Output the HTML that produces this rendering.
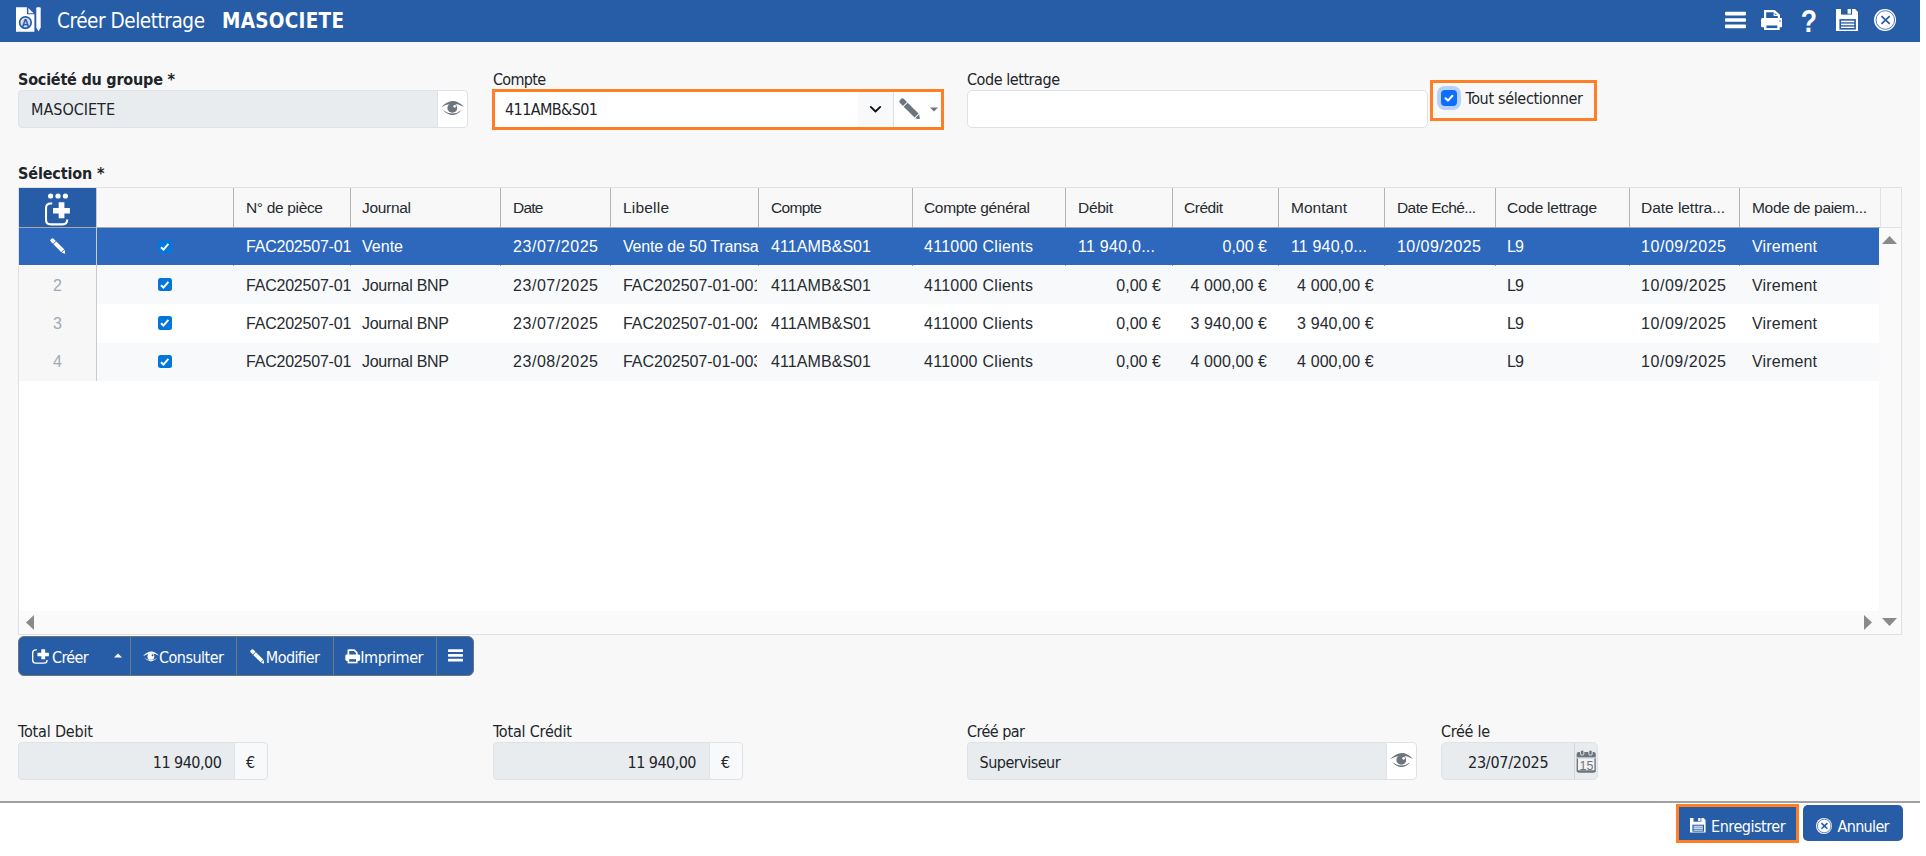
<!DOCTYPE html>
<html lang="fr"><head><meta charset="utf-8"><title>Créer Delettrage MASOCIETE</title>
<style>
html,body{margin:0;padding:0;background:#fff}
body{width:1926px;height:856px;position:relative;overflow:hidden;color:#212529}
#app{position:absolute;left:0;top:0;width:1920px;height:856px;overflow:hidden}
#app div,#app svg,#app span.t{position:absolute;box-sizing:border-box}
.t{white-space:pre;line-height:20px;height:20px}
.u{font-family:"DejaVu Sans Condensed","Liberation Sans",sans-serif}
.g{font-family:"Liberation Sans",sans-serif}
</style></head>
<body>
<div id="app">
<div class="hdr" style="left:0px;top:0px;width:1920px;height:42px;background:#275ca6"></div>
<svg style="left:16px;top:7px" width="25" height="25" viewBox="0 0 25 25" ><path d="M0,0.2H10.9V7.3H18.4V24.7H0Z" fill="#fff"/><path d="M12.3,1L17.7,6.2H12.3Z" fill="#fff"/>
<circle cx="9.4" cy="15.6" r="5.8" fill="#d3ddee" stroke="#275ca6" stroke-width="1.7"/>
<text x="9.4" y="19.6" font-family="Liberation Sans,sans-serif" font-weight="700" font-size="11" text-anchor="middle" fill="#275ca6">A</text>
<path d="M20.3,1.2Q20.3,0.2 21.3,0.2H23.7Q24.7,0.2 24.7,1.2V20.5L22.5,24.4L20.3,20.5Z" fill="#fff"/></svg>
<span class="t u" style="top:11.30px;font-size:20.5px;left:57px;color:#fff;letter-spacing:-0.439px;">Créer Delettrage</span>
<span class="t u" style="top:11.30px;font-size:20.5px;left:222px;font-weight:700;color:#fff;letter-spacing:0.277px;">MASOCIETE</span>
<svg style="left:1725px;top:11px" width="21" height="18" viewBox="0 0 21 18" ><rect x="0" y="0.8" width="21" height="3.6" rx="0.8" fill="#fff"/><rect x="0" y="7.2" width="21" height="3.6" rx="0.8" fill="#fff"/><rect x="0" y="13.6" width="21" height="3.6" rx="0.8" fill="#fff"/></svg>
<svg style="left:1760.75px;top:9.76px" width="21.5" height="20.7" viewBox="0 0 21.5 20.7" ><path d="M4.1,9.5V1.1H13.3L17.9,5.3V9.5" fill="#275ca6" stroke="#fff" stroke-width="2.2" stroke-linejoin="miter"/>
<path d="M13.2,1.1V5.4H17.9" fill="none" stroke="#fff" stroke-width="1.1"/>
<rect x="0" y="8" width="21.5" height="9.3" rx="1.6" fill="#fff"/>
<rect x="3" y="14" width="15.7" height="6.7" fill="#fff"/><rect x="5.4" y="15.5" width="10.9" height="2.6" fill="#275ca6"/>
<circle cx="19" cy="11.1" r="0.75" fill="#275ca6"/></svg>
<span class="t g" style="top:11.76px;font-size:31px;left:1659px;width:300px;text-align:center;font-weight:700;color:#fff;transform:scaleX(0.86);">?</span>
<svg style="left:1835.9px;top:9px" width="22.1" height="22" viewBox="0 0 22.1 22" preserveAspectRatio="none"><path d="M0,0H19.1L22.1,3.2V22H0Z" fill="#fff"/>
<rect x="5" y="0" width="11.1" height="5.6" fill="#275ca6"/><rect x="11.6" y="0" width="3.3" height="4.7" fill="#fff"/>
<rect x="3.4" y="10.1" width="16.5" height="10.5" fill="#275ca6"/>
<rect x="5" y="11.7" width="13.3" height="1.4" fill="#fff"/><rect x="5" y="13.6" width="13.3" height="1" fill="#9db4d8"/><rect x="5" y="14.9" width="13.3" height="1.3" fill="#fff"/><rect x="5" y="17.6" width="13.3" height="1.4" fill="#fff"/></svg>
<svg style="left:1874px;top:9px" width="22" height="22" viewBox="0 0 22 22" ><circle cx="11" cy="11" r="11" fill="#fff"/><circle cx="11.3" cy="11" r="9.3" fill="none" stroke="#275ca6" stroke-width="0.8"/>
<path d="M7.5,7.1L15.7,14.8M15.7,7.1L7.5,14.8" stroke="#275ca6" stroke-width="1.7" stroke-linecap="butt"/></svg>
<div class="main" style="left:0px;top:42px;width:1920px;height:759px;background:#f8f8f8"></div>
<span class="t u" style="top:69.66px;font-size:16px;left:18px;font-weight:700;letter-spacing:-0.214px;">Société du groupe *</span>
<div class="inp" style="left:18px;top:90px;width:420px;height:38px;background:#e9ecef;border:1px solid #dee2e6;border-radius:4px 0 0 4px"></div>
<div class="btn" style="left:437px;top:90px;width:31px;height:38px;background:#fff;border:1px solid #dee2e6;border-radius:0 4px 4px 0"></div>
<span class="t u" style="top:100.16px;font-size:16px;left:31px;letter-spacing:-0.002px;">MASOCIETE</span>
<svg style="left:441.2px;top:101px" width="23.3" height="14" viewBox="0 0 23.3 14" ><path d="M0,6.5Q11.6,-6.4 23.3,6.3Q11.6,-0.9 0,6.5Z" fill="#6c757d"/>
<path d="M1.8,8.9Q11.6,19.2 20.7,8.9Q11.6,16 1.8,8.9Z" fill="#6c757d"/>
<circle cx="11.3" cy="6.9" r="4.9" fill="#6c757d"/><circle cx="13.7" cy="5.3" r="1.35" fill="#fff"/></svg>
<span class="t u" style="top:69.66px;font-size:16px;left:493px;letter-spacing:-0.706px;">Compte</span>
<div class="inp" style="left:493px;top:90px;width:450px;height:38px;background:#fff;border:1px solid #dee2e6"></div>
<div style="left:858px;top:91px;width:35px;height:36px;background:#f8f9fa"></div>
<div style="left:893px;top:91px;width:1px;height:36px;background:#dee2e6"></div>
<span class="t u" style="top:100.16px;font-size:16px;left:505px;letter-spacing:-0.589px;">411AMB&amp;S01</span>
<svg style="left:868px;top:104px" width="15" height="10" viewBox="0 0 15 10" ><path d="M2.8,2.9L7.5,7.5L12.2,2.9" fill="none" stroke="#111" stroke-width="1.9" stroke-linecap="round" stroke-linejoin="round"/></svg>
<svg style="left:898.7px;top:97.8px" width="21.3" height="21.3" viewBox="-1.5 -1.5 21.3 21.3" ><g transform="rotate(45)" fill="#6c757d"><path d="M2.4,-2.8H6.4V2.8H2.4Q0,2.8 0,0.6V-0.6Q0,-2.8 2.4,-2.8Z"/>
<rect x="7.3" y="-2.8" width="15.4" height="5.6"/><path d="M23.6,-2.8L28,0.5L23.6,2.8Z"/></g></svg>
<svg style="left:930px;top:107px" width="8" height="5" viewBox="0 0 8 5" ><path d="M0,0.4H8L4,4.4Z" fill="#6c757d"/></svg>
<div class="hl" style="left:492px;top:89px;width:452px;height:41px;border:3px solid #ff7f27"></div>
<span class="t u" style="top:69.66px;font-size:16px;left:967px;letter-spacing:-0.443px;">Code lettrage</span>
<div class="inp" style="left:967px;top:90px;width:461px;height:38px;background:#fff;border:1px solid #dee2e6;border-radius:5px"></div>
<div class="hl" style="left:1430px;top:80px;width:167px;height:41px;border:3px solid #ff7f27"></div>
<div class="chk" style="left:1441px;top:89.6px;width:16px;height:16px;background:#0d6efd;border-radius:4px;box-shadow:0 0 0 4px rgba(13,110,253,.28)"></div>
<svg style="left:1441px;top:89.6px" width="16" height="16" viewBox="0 0 16 16" ><path d="M4.6,8.3L7,10.6L11.4,5.8" fill="none" stroke="#fff" stroke-width="2.1" stroke-linecap="round" stroke-linejoin="round"/></svg>
<span class="t u" style="top:88.96px;font-size:16px;left:1465.4px;letter-spacing:-0.326px;">Tout sélectionner</span>
<span class="t u" style="top:164.16px;font-size:16px;left:18px;font-weight:700;letter-spacing:-0.124px;">Sélection *</span>
<div class="grid" style="left:18px;top:187px;width:1884px;height:448px;background:#fff;border:1px solid #dee2e6"></div>
<div style="left:19px;top:188px;width:1861px;height:39px;background:#f8f8f8"></div>
<div style="left:1880px;top:188px;width:21px;height:40px;background:#f8f8f8;border-left:1px solid #dee2e6;border-bottom:1px solid #dee2e6"></div>
<div style="left:19px;top:188px;width:77px;height:39px;background:#275ca6"></div>
<div style="left:233px;top:188px;width:1px;height:39px;background:#b4b4b4"></div>
<div style="left:350px;top:188px;width:1px;height:39px;background:#b4b4b4"></div>
<div style="left:500px;top:188px;width:1px;height:39px;background:#b4b4b4"></div>
<div style="left:610px;top:188px;width:1px;height:39px;background:#b4b4b4"></div>
<div style="left:758px;top:188px;width:1px;height:39px;background:#b4b4b4"></div>
<div style="left:912px;top:188px;width:1px;height:39px;background:#b4b4b4"></div>
<div style="left:1065px;top:188px;width:1px;height:39px;background:#b4b4b4"></div>
<div style="left:1172px;top:188px;width:1px;height:39px;background:#b4b4b4"></div>
<div style="left:1278px;top:188px;width:1px;height:39px;background:#b4b4b4"></div>
<div style="left:1384px;top:188px;width:1px;height:39px;background:#b4b4b4"></div>
<div style="left:1495px;top:188px;width:1px;height:39px;background:#b4b4b4"></div>
<div style="left:1629px;top:188px;width:1px;height:39px;background:#b4b4b4"></div>
<div style="left:1739px;top:188px;width:1px;height:39px;background:#b4b4b4"></div>
<div style="left:19px;top:227px;width:1861px;height:1px;background:#a8a8a8"></div>
<div style="left:233px;top:265px;width:1px;height:1px;background:#7d9fd6"></div>
<div style="left:350px;top:265px;width:1px;height:1px;background:#7d9fd6"></div>
<div style="left:500px;top:265px;width:1px;height:1px;background:#7d9fd6"></div>
<div style="left:610px;top:265px;width:1px;height:1px;background:#7d9fd6"></div>
<div style="left:758px;top:265px;width:1px;height:1px;background:#7d9fd6"></div>
<div style="left:912px;top:265px;width:1px;height:1px;background:#7d9fd6"></div>
<div style="left:1065px;top:265px;width:1px;height:1px;background:#7d9fd6"></div>
<div style="left:1172px;top:265px;width:1px;height:1px;background:#7d9fd6"></div>
<div style="left:1278px;top:265px;width:1px;height:1px;background:#7d9fd6"></div>
<div style="left:1384px;top:265px;width:1px;height:1px;background:#7d9fd6"></div>
<div style="left:1495px;top:265px;width:1px;height:1px;background:#7d9fd6"></div>
<div style="left:1629px;top:265px;width:1px;height:1px;background:#7d9fd6"></div>
<div style="left:1739px;top:265px;width:1px;height:1px;background:#7d9fd6"></div>
<div style="left:19px;top:228px;width:1860px;height:37px;background:#2d68bd"></div>
<div style="left:19px;top:266px;width:1860px;height:38.39999999999998px;background:#f8f9fa"></div>
<div style="left:19px;top:304.4px;width:1860px;height:38.400000000000034px;background:#fff"></div>
<div style="left:19px;top:342.8px;width:1860px;height:38.39999999999998px;background:#f8f9fa"></div>
<div style="left:19px;top:228px;width:77px;height:37px;background:#2d68bd"></div>
<div style="left:19px;top:266px;width:77px;height:115.2px;background:#f7f7f7"></div>
<div style="left:96px;top:188px;width:1px;height:193.2px;background:#cbcbcb"></div>
<div style="left:1879px;top:228px;width:22px;height:383px;background:#fafafa"></div>
<div style="left:19px;top:611px;width:1882px;height:23px;background:#fafafa"></div>
<svg style="left:1882px;top:236px" width="15" height="8" viewBox="0 0 15 8" ><path d="M0,8L7.5,0L15,8Z" fill="#8a8a8a"/></svg>
<svg style="left:1882px;top:618px" width="15" height="8" viewBox="0 0 15 8" ><path d="M0,0H15L7.5,8Z" fill="#8a8a8a"/></svg>
<svg style="left:26px;top:615px" width="8" height="15" viewBox="0 0 8 15" ><path d="M8,0V15L0,7.5Z" fill="#8a8a8a"/></svg>
<svg style="left:1864px;top:615px" width="8" height="15" viewBox="0 0 8 15" ><path d="M0,0L8,7.5L0,15Z" fill="#8a8a8a"/></svg>
<svg style="left:47px;top:192px" width="22" height="8" viewBox="0 0 22 8" ><circle cx="3.6" cy="4" r="2.6" fill="#fff"/><circle cx="11" cy="4" r="2.6" fill="#fff"/><circle cx="18.4" cy="4" r="2.6" fill="#fff"/></svg>
<svg style="left:45.4px;top:202.4px" width="25.2" height="24.0" viewBox="0 0 25.2 24" preserveAspectRatio="none"><path d="M7.2,1.5H5.6Q1,1.5 1,6.1V17.8Q1,22.4 5.6,22.4H17.6Q22.2,22.4 22.2,17.8V17.6" fill="none" stroke="#fff" stroke-width="2.1" stroke-linecap="butt"/>
<path d="M13.7,0.2H19.4V5.9H24.9V11.4H19.4V16.3H13.7V11.4H8V5.9H13.7Z" fill="#fff"/></svg>
<svg style="left:50px;top:238px" width="15.5" height="15.5" viewBox="-1.5 -1.5 21.3 21.3" ><g transform="rotate(45)" fill="#fff"><path d="M2.4,-2.8H6.4V2.8H2.4Q0,2.8 0,0.6V-0.6Q0,-2.8 2.4,-2.8Z"/>
<rect x="7.3" y="-2.8" width="15.4" height="5.6"/><path d="M23.6,-2.8L28,0.5L23.6,2.8Z"/></g></svg>
<span class="t g" style="top:197.73px;font-size:15.5px;left:246px;color:#262b30;letter-spacing:-0.331px;">N° de pièce</span>
<span class="t g" style="top:197.73px;font-size:15.5px;left:362px;color:#262b30;letter-spacing:-0.307px;">Journal</span>
<span class="t g" style="top:197.73px;font-size:15.5px;left:513px;color:#262b30;letter-spacing:-0.750px;">Date</span>
<span class="t g" style="top:197.73px;font-size:15.5px;left:623px;color:#262b30;letter-spacing:0.198px;">Libelle</span>
<span class="t g" style="top:197.73px;font-size:15.5px;left:771px;color:#262b30;letter-spacing:-0.656px;">Compte</span>
<span class="t g" style="top:197.73px;font-size:15.5px;left:924px;color:#262b30;letter-spacing:-0.331px;">Compte général</span>
<span class="t g" style="top:197.73px;font-size:15.5px;left:1078px;color:#262b30;letter-spacing:-0.297px;">Débit</span>
<span class="t g" style="top:197.73px;font-size:15.5px;left:1184px;color:#262b30;letter-spacing:-0.472px;">Crédit</span>
<span class="t g" style="top:197.73px;font-size:15.5px;left:1291px;color:#262b30;letter-spacing:-0.003px;">Montant</span>
<span class="t g" style="top:197.73px;font-size:15.5px;left:1397px;color:#262b30;letter-spacing:-0.572px;">Date Eché...</span>
<span class="t g" style="top:197.73px;font-size:15.5px;left:1507px;color:#262b30;letter-spacing:-0.255px;">Code lettrage</span>
<span class="t g" style="top:197.73px;font-size:15.5px;left:1641px;color:#262b30;letter-spacing:-0.034px;">Date lettra...</span>
<span class="t g" style="top:197.73px;font-size:15.5px;left:1752px;color:#262b30;letter-spacing:-0.318px;">Mode de paiem...</span>
<div class="cb" style="left:158.2px;top:239.8px;width:13.4px;height:13.6px;background:#0476d9;border-radius:2.5px"></div>
<svg style="left:158.2px;top:239.8px" width="13.4" height="13.6" viewBox="0 0 13 13" ><path d="M2.9,6.9L5.3,9.2L10.1,3.6" fill="none" stroke="#fff" stroke-width="1.9" stroke-linejoin="miter"/></svg>
<span class="t g" style="top:236.66px;font-size:16px;left:246px;color:#fff;letter-spacing:-0.213px;">FAC202507-01</span>
<span class="t g" style="top:236.66px;font-size:16px;left:362px;color:#fff;letter-spacing:0.016px;">Vente</span>
<span class="t g" style="top:236.66px;font-size:16px;left:513px;color:#fff;letter-spacing:0.547px;">23/07/2025</span>
<span class="t g" style="top:236.66px;font-size:16px;left:623px;color:#fff;letter-spacing:-0.187px;width:136px;overflow:hidden;">Vente de 50 Transa</span>
<span class="t g" style="top:236.66px;font-size:16px;left:771px;color:#fff;letter-spacing:0.075px;">411AMB&amp;S01</span>
<span class="t g" style="top:236.66px;font-size:16px;left:924px;color:#fff;letter-spacing:0.264px;">411000 Clients</span>
<span class="t g" style="top:236.66px;font-size:16px;left:1078px;color:#fff;letter-spacing:0.256px;">11 940,0...</span>
<span class="t g" style="top:236.66px;font-size:16px;right:653.00px;color:#fff;letter-spacing:0.003px;">0,00 €</span>
<span class="t g" style="top:236.66px;font-size:16px;left:1291px;color:#fff;letter-spacing:0.156px;">11 940,0...</span>
<span class="t g" style="top:236.66px;font-size:16px;left:1397px;color:#fff;letter-spacing:0.436px;">10/09/2025</span>
<span class="t g" style="top:236.66px;font-size:16px;left:1507px;color:#fff;letter-spacing:-0.797px;">L9</span>
<span class="t g" style="top:236.66px;font-size:16px;left:1641px;color:#fff;letter-spacing:0.547px;">10/09/2025</span>
<span class="t g" style="top:236.66px;font-size:16px;left:1752px;color:#fff;letter-spacing:0.181px;">Virement</span>
<span class="t g" style="top:275.66px;font-size:16px;left:-92.5px;width:300px;text-align:center;color:#a0a9b6;">2</span>
<div class="cb" style="left:158.2px;top:277.8px;width:13.4px;height:13.6px;background:#0476d9;border-radius:2.5px"></div>
<svg style="left:158.2px;top:277.8px" width="13.4" height="13.6" viewBox="0 0 13 13" ><path d="M2.9,6.9L5.3,9.2L10.1,3.6" fill="none" stroke="#fff" stroke-width="1.9" stroke-linejoin="miter"/></svg>
<span class="t g" style="top:275.66px;font-size:16px;left:246px;color:#262b30;letter-spacing:-0.213px;">FAC202507-01</span>
<span class="t g" style="top:275.66px;font-size:16px;left:362px;color:#262b30;letter-spacing:-0.283px;">Journal BNP</span>
<span class="t g" style="top:275.66px;font-size:16px;left:513px;color:#262b30;letter-spacing:0.547px;">23/07/2025</span>
<span class="t g" style="top:275.66px;font-size:16px;left:623px;color:#262b30;letter-spacing:-0.026px;width:134.2px;overflow:hidden;">FAC202507-01-001</span>
<span class="t g" style="top:275.66px;font-size:16px;left:771px;color:#262b30;letter-spacing:0.075px;">411AMB&amp;S01</span>
<span class="t g" style="top:275.66px;font-size:16px;left:924px;color:#262b30;letter-spacing:0.264px;">411000 Clients</span>
<span class="t g" style="top:275.66px;font-size:16px;right:759.20px;color:#262b30;letter-spacing:0.003px;">0,00 €</span>
<span class="t g" style="top:275.66px;font-size:16px;right:652.90px;color:#262b30;letter-spacing:0.097px;">4 000,00 €</span>
<span class="t g" style="top:275.66px;font-size:16px;right:546.30px;color:#262b30;letter-spacing:0.097px;">4 000,00 €</span>
<span class="t g" style="top:275.66px;font-size:16px;left:1507px;color:#262b30;letter-spacing:-0.797px;">L9</span>
<span class="t g" style="top:275.66px;font-size:16px;left:1641px;color:#262b30;letter-spacing:0.547px;">10/09/2025</span>
<span class="t g" style="top:275.66px;font-size:16px;left:1752px;color:#262b30;letter-spacing:0.181px;">Virement</span>
<span class="t g" style="top:314.06px;font-size:16px;left:-92.5px;width:300px;text-align:center;color:#a0a9b6;">3</span>
<div class="cb" style="left:158.2px;top:316.2px;width:13.4px;height:13.6px;background:#0476d9;border-radius:2.5px"></div>
<svg style="left:158.2px;top:316.2px" width="13.4" height="13.6" viewBox="0 0 13 13" ><path d="M2.9,6.9L5.3,9.2L10.1,3.6" fill="none" stroke="#fff" stroke-width="1.9" stroke-linejoin="miter"/></svg>
<span class="t g" style="top:314.06px;font-size:16px;left:246px;color:#262b30;letter-spacing:-0.213px;">FAC202507-01</span>
<span class="t g" style="top:314.06px;font-size:16px;left:362px;color:#262b30;letter-spacing:-0.283px;">Journal BNP</span>
<span class="t g" style="top:314.06px;font-size:16px;left:513px;color:#262b30;letter-spacing:0.547px;">23/07/2025</span>
<span class="t g" style="top:314.06px;font-size:16px;left:623px;color:#262b30;letter-spacing:-0.026px;width:134.2px;overflow:hidden;">FAC202507-01-002</span>
<span class="t g" style="top:314.06px;font-size:16px;left:771px;color:#262b30;letter-spacing:0.075px;">411AMB&amp;S01</span>
<span class="t g" style="top:314.06px;font-size:16px;left:924px;color:#262b30;letter-spacing:0.264px;">411000 Clients</span>
<span class="t g" style="top:314.06px;font-size:16px;right:759.20px;color:#262b30;letter-spacing:0.003px;">0,00 €</span>
<span class="t g" style="top:314.06px;font-size:16px;right:652.90px;color:#262b30;letter-spacing:0.097px;">3 940,00 €</span>
<span class="t g" style="top:314.06px;font-size:16px;right:546.30px;color:#262b30;letter-spacing:0.097px;">3 940,00 €</span>
<span class="t g" style="top:314.06px;font-size:16px;left:1507px;color:#262b30;letter-spacing:-0.797px;">L9</span>
<span class="t g" style="top:314.06px;font-size:16px;left:1641px;color:#262b30;letter-spacing:0.547px;">10/09/2025</span>
<span class="t g" style="top:314.06px;font-size:16px;left:1752px;color:#262b30;letter-spacing:0.181px;">Virement</span>
<span class="t g" style="top:352.46px;font-size:16px;left:-92.5px;width:300px;text-align:center;color:#a0a9b6;">4</span>
<div class="cb" style="left:158.2px;top:354.6px;width:13.4px;height:13.6px;background:#0476d9;border-radius:2.5px"></div>
<svg style="left:158.2px;top:354.6px" width="13.4" height="13.6" viewBox="0 0 13 13" ><path d="M2.9,6.9L5.3,9.2L10.1,3.6" fill="none" stroke="#fff" stroke-width="1.9" stroke-linejoin="miter"/></svg>
<span class="t g" style="top:352.46px;font-size:16px;left:246px;color:#262b30;letter-spacing:-0.213px;">FAC202507-01</span>
<span class="t g" style="top:352.46px;font-size:16px;left:362px;color:#262b30;letter-spacing:-0.283px;">Journal BNP</span>
<span class="t g" style="top:352.46px;font-size:16px;left:513px;color:#262b30;letter-spacing:0.547px;">23/08/2025</span>
<span class="t g" style="top:352.46px;font-size:16px;left:623px;color:#262b30;letter-spacing:-0.026px;width:134.2px;overflow:hidden;">FAC202507-01-003</span>
<span class="t g" style="top:352.46px;font-size:16px;left:771px;color:#262b30;letter-spacing:0.075px;">411AMB&amp;S01</span>
<span class="t g" style="top:352.46px;font-size:16px;left:924px;color:#262b30;letter-spacing:0.264px;">411000 Clients</span>
<span class="t g" style="top:352.46px;font-size:16px;right:759.20px;color:#262b30;letter-spacing:0.003px;">0,00 €</span>
<span class="t g" style="top:352.46px;font-size:16px;right:652.90px;color:#262b30;letter-spacing:0.097px;">4 000,00 €</span>
<span class="t g" style="top:352.46px;font-size:16px;right:546.30px;color:#262b30;letter-spacing:0.097px;">4 000,00 €</span>
<span class="t g" style="top:352.46px;font-size:16px;left:1507px;color:#262b30;letter-spacing:-0.797px;">L9</span>
<span class="t g" style="top:352.46px;font-size:16px;left:1641px;color:#262b30;letter-spacing:0.547px;">10/09/2025</span>
<span class="t g" style="top:352.46px;font-size:16px;left:1752px;color:#262b30;letter-spacing:0.181px;">Virement</span>
<div class="tb" style="left:18px;top:636px;width:456px;height:40px;background:#275ca6;border:1px solid #6f7276;border-radius:6px"></div>
<div style="left:130px;top:637px;width:1px;height:38px;background:#737880"></div>
<div style="left:236px;top:637px;width:1px;height:38px;background:#737880"></div>
<div style="left:332.5px;top:637px;width:1px;height:38px;background:#737880"></div>
<div style="left:436.3px;top:637px;width:1px;height:38px;background:#737880"></div>
<svg style="left:32.2px;top:648.9px" width="17.1" height="15.1" viewBox="0 0 25.2 24" preserveAspectRatio="none"><path d="M7.2,1.5H5.6Q1,1.5 1,6.1V17.8Q1,22.4 5.6,22.4H17.6Q22.2,22.4 22.2,17.8V17.6" fill="none" stroke="#fff" stroke-width="2.1" stroke-linecap="butt"/>
<path d="M13.7,0.2H19.4V5.9H24.9V11.4H19.4V16.3H13.7V11.4H8V5.9H13.7Z" fill="#fff"/></svg>
<span class="t u" style="top:648.26px;font-size:16px;left:52px;color:#fff;letter-spacing:-0.637px;">Créer</span>
<svg style="left:114px;top:653.4px" width="8" height="5" viewBox="0 0 8 5" ><path d="M0,4.6H8L4,0.4Z" fill="#fff"/></svg>
<svg style="left:143px;top:651px" width="16.3" height="11" viewBox="0 0 23.3 14" ><path d="M0,6.5Q11.6,-6.4 23.3,6.3Q11.6,-0.9 0,6.5Z" fill="#fff"/>
<path d="M1.8,8.9Q11.6,19.2 20.7,8.9Q11.6,16 1.8,8.9Z" fill="#fff"/>
<circle cx="11.3" cy="6.9" r="4.9" fill="#fff"/><circle cx="13.7" cy="5.3" r="1.35" fill="#275ca6"/></svg>
<span class="t u" style="top:648.26px;font-size:16px;left:159px;color:#fff;letter-spacing:-0.504px;">Consulter</span>
<svg style="left:249.5px;top:649px" width="14.5" height="14.5" viewBox="-1.5 -1.5 21.3 21.3" ><g transform="rotate(45)" fill="#fff"><path d="M2.4,-2.8H6.4V2.8H2.4Q0,2.8 0,0.6V-0.6Q0,-2.8 2.4,-2.8Z"/>
<rect x="7.3" y="-2.8" width="15.4" height="5.6"/><path d="M23.6,-2.8L28,0.5L23.6,2.8Z"/></g></svg>
<span class="t u" style="top:648.26px;font-size:16px;left:265.8px;color:#fff;letter-spacing:-0.574px;">Modifier</span>
<svg style="left:345px;top:649px" width="15.5" height="14.5" viewBox="0 0 23 21" ><path d="M5,9V1.4H13.5L17.5,5V9" fill="#275ca6" stroke="#fff" stroke-width="2.6" stroke-linejoin="round"/>
<rect x="0.5" y="8" width="22" height="9.5" rx="2" fill="#fff"/>
<rect x="5" y="13.6" width="12.5" height="6.2" fill="#275ca6" stroke="#fff" stroke-width="2.4"/></svg>
<span class="t u" style="top:648.26px;font-size:16px;left:360.3px;color:#fff;letter-spacing:-0.418px;">Imprimer</span>
<svg style="left:448px;top:649px" width="15" height="13" viewBox="0 0 15 13" ><rect x="0" y="0.2" width="15" height="2.7" rx="0.6" fill="#fff"/><rect x="0" y="5" width="15" height="2.7" rx="0.6" fill="#fff"/><rect x="0" y="9.8" width="15" height="2.7" rx="0.6" fill="#fff"/></svg>
<span class="t u" style="top:722.16px;font-size:16px;left:18px;letter-spacing:-0.164px;">Total Debit</span>
<div class="inp" style="left:18px;top:742px;width:217px;height:38px;background:#e9ecef;border:1px solid #dee2e6;border-radius:4px 0 0 4px"></div>
<div style="left:234px;top:742px;width:34px;height:38px;background:#f8f9fa;border:1px solid #dee2e6;border-radius:0 4px 4px 0"></div>
<span class="t u" style="top:753.26px;font-size:16px;right:1698.73px;letter-spacing:-0.529px;">11 940,00</span>
<span class="t u" style="top:753.26px;font-size:16px;left:246px;">€</span>
<span class="t u" style="top:722.16px;font-size:16px;left:493px;letter-spacing:-0.197px;">Total Crédit</span>
<div class="inp" style="left:492.5px;top:742px;width:217px;height:38px;background:#e9ecef;border:1px solid #dee2e6;border-radius:4px 0 0 4px"></div>
<div style="left:708.5px;top:742px;width:34px;height:38px;background:#f8f9fa;border:1px solid #dee2e6;border-radius:0 4px 4px 0"></div>
<span class="t u" style="top:753.26px;font-size:16px;right:1224.03px;letter-spacing:-0.529px;">11 940,00</span>
<span class="t u" style="top:753.26px;font-size:16px;left:721px;">€</span>
<span class="t u" style="top:722.16px;font-size:16px;left:967px;letter-spacing:-0.540px;">Créé par</span>
<div class="inp" style="left:967px;top:742px;width:420px;height:38px;background:#e9ecef;border:1px solid #dee2e6;border-radius:4px 0 0 4px"></div>
<div style="left:1386px;top:742px;width:31px;height:38px;background:#fff;border:1px solid #dee2e6;border-radius:0 4px 4px 0"></div>
<span class="t u" style="top:753.26px;font-size:16px;left:979.6px;letter-spacing:-0.509px;">Superviseur</span>
<svg style="left:1390.2px;top:753px" width="23.3" height="14" viewBox="0 0 23.3 14" ><path d="M0,6.5Q11.6,-6.4 23.3,6.3Q11.6,-0.9 0,6.5Z" fill="#6c757d"/>
<path d="M1.8,8.9Q11.6,19.2 20.7,8.9Q11.6,16 1.8,8.9Z" fill="#6c757d"/>
<circle cx="11.3" cy="6.9" r="4.9" fill="#6c757d"/><circle cx="13.7" cy="5.3" r="1.35" fill="#fff"/></svg>
<span class="t u" style="top:722.16px;font-size:16px;left:1441px;letter-spacing:-0.294px;">Créé le</span>
<div class="inp" style="left:1441px;top:742px;width:157px;height:38px;background:#e9ecef;border:1px solid #dee2e6;border-radius:5px"></div>
<div style="left:1574px;top:743px;width:1px;height:36px;background:#d0d5da"></div>
<span class="t u" style="top:753.26px;font-size:16px;left:1468px;letter-spacing:-0.261px;">23/07/2025</span>
<svg style="left:1575.9px;top:750px" width="20.4" height="22.8" viewBox="0 0 19.7 22.8" preserveAspectRatio="none"><path d="M0.6,7.2V4Q0.6,2 2.6,2H17.1Q19.1,2 19.1,4V7.2Z" fill="#6c757d"/>
<rect x="0.6" y="7.2" width="18.5" height="1.3" fill="#b4b8bc"/>
<path d="M1.25,8.5V20.4Q1.25,21.9 2.8,21.9H16.9Q18.45,21.9 18.45,20.4V8.5" fill="#f1f2f3" stroke="#6c757d" stroke-width="1.3"/>
<path d="M0.6,20.3H19.1V20.8Q19.1,22.6 17.3,22.6H2.4Q0.6,22.6 0.6,20.8Z" fill="#6c757d"/>
<rect x="4.4" y="0.2" width="3.2" height="5" rx="1.3" fill="#6c757d" stroke="#e9ecef" stroke-width="0.9"/><rect x="12.4" y="0.2" width="3.2" height="5" rx="1.3" fill="#6c757d" stroke="#e9ecef" stroke-width="0.9"/>
<text x="10.1" y="19.7" font-family="Liberation Sans,sans-serif" font-size="12" text-anchor="middle" fill="#6c757d">15</text></svg>
<div style="left:0px;top:801px;width:1920px;height:2px;background:#a1a1a1"></div>
<div class="ftr" style="left:0px;top:803px;width:1920px;height:53px;background:#fff"></div>
<div class="hl" style="left:1676px;top:804px;width:123px;height:39px;background:#275ca6;border:3px solid #ff7f27"></div>
<svg style="left:1690px;top:818.3px" width="15.6" height="14.6" viewBox="0 0 22.1 22" preserveAspectRatio="none"><path d="M0,0H19.1L22.1,3.2V22H0Z" fill="#fff"/>
<rect x="5" y="0" width="11.1" height="5.6" fill="#275ca6"/><rect x="11.6" y="0" width="3.3" height="4.7" fill="#fff"/>
<rect x="3.4" y="10.1" width="16.5" height="10.5" fill="#275ca6"/>
<rect x="5" y="11.7" width="13.3" height="1.4" fill="#fff"/><rect x="5" y="13.6" width="13.3" height="1" fill="#c3d0e6"/><rect x="5" y="14.9" width="13.3" height="1.3" fill="#fff"/><rect x="5" y="17.6" width="13.3" height="1.4" fill="#fff"/></svg>
<span class="t u" style="top:816.76px;font-size:16px;left:1711px;color:#fff;letter-spacing:-0.457px;">Enregistrer</span>
<div class="btn" style="left:1803px;top:805px;width:100px;height:36px;background:#275ca6;border-radius:5px"></div>
<svg style="left:1816px;top:817.5px" width="16" height="16" viewBox="0 0 22 22" ><circle cx="11" cy="11" r="11" fill="#fff"/><circle cx="11.3" cy="11" r="9.3" fill="none" stroke="#275ca6" stroke-width="1"/>
<path d="M7.5,7.1L15.7,14.8M15.7,7.1L7.5,14.8" stroke="#275ca6" stroke-width="2.2" stroke-linecap="butt"/></svg>
<span class="t u" style="top:816.76px;font-size:16px;left:1837.5px;color:#fff;letter-spacing:-0.667px;">Annuler</span>
</div>
</body></html>
